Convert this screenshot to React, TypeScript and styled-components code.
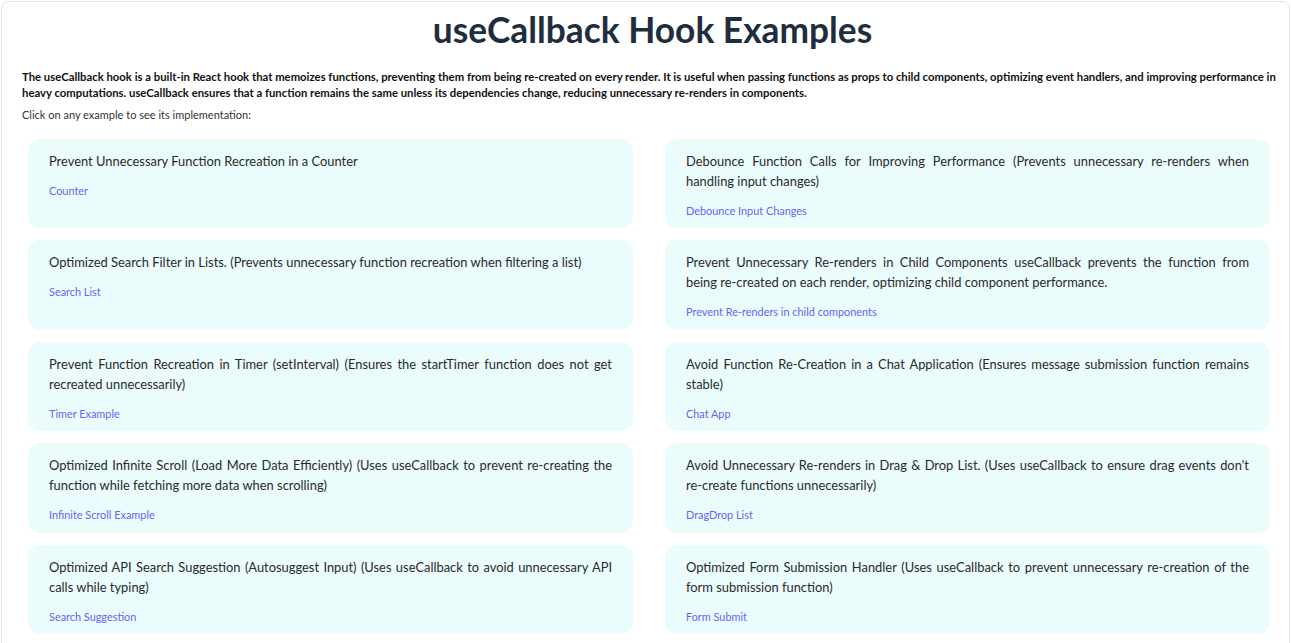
import React from "react";
import styled, { createGlobalStyle } from "styled-components";

const GlobalStyle = createGlobalStyle`
  html, body {
    margin: 0;
    padding: 0;
    background: #ffffff;
  }
  body {
    font-family: "Lato", "Noto Sans", sans-serif;
    color: #222;
  }
`;

const Page = styled.div`
  padding: 1px 1px 0 1px;
`;

const Container = styled.div`
  border: 1px solid #e6e6e6;
  border-radius: 8px;
  padding: 0 6px 20px 20px;
  background: #fff;
`;

const Title = styled.h1`
  margin: 0;
  padding-top: 8px;
  text-align: center;
  font-family: "Lato", sans-serif;
  font-weight: 700;
  font-size: 35.3px;
  line-height: 40px;
  color: #1f2e3f;
`;

const Intro = styled.p`
  margin: 19px 0 0;
  font-size: 11.32px;
  line-height: 16px;
  font-weight: 700;
  color: #111;
`;

const Hint = styled.p`
  margin: 6px 0 0;
  font-size: 11px;
  line-height: 16px;
  color: #333;
`;

const Grid = styled.div`
  display: grid;
  grid-template-columns: 1fr 1fr;
  column-gap: 32px;
  row-gap: 12px;
  margin: 16px 13px 0 6px;
`;

const Card = styled.div`
  background: #ebfcfd;
  border-radius: 12px;
  padding: 12px 21px 9.4px;
  cursor: pointer;
`;

const CardText = styled.p`
  margin: 0;
  font-size: 12.9px;
  line-height: 20px;
  color: #2a2a2a;
  text-align: justify;
`;

const CardLink = styled.a`
  display: block;
  margin-top: 12px;
  font-size: 10.9px;
  line-height: 16px;
  color: #6a63f0;
  text-decoration: none;
`;

const examples = [
  { text: "Prevent Unnecessary Function Recreation in a Counter", link: "Counter" },
  {
    text: "Debounce Function Calls for Improving Performance (Prevents unnecessary re-renders when handling input changes)",
    link: "Debounce Input Changes",
  },
  {
    text: "Optimized Search Filter in Lists. (Prevents unnecessary function recreation when filtering a list)",
    link: "Search List",
  },
  {
    text: "Prevent Unnecessary Re-renders in Child Components useCallback prevents the function from being re-created on each render, optimizing child component performance.",
    link: "Prevent Re-renders in child components",
  },
  {
    text: "Prevent Function Recreation in Timer (setInterval) (Ensures the startTimer function does not get recreated unnecessarily)",
    link: "Timer Example",
  },
  {
    text: "Avoid Function Re-Creation in a Chat Application (Ensures message submission function remains stable)",
    link: "Chat App",
  },
  {
    text: "Optimized Infinite Scroll (Load More Data Efficiently) (Uses useCallback to prevent re-creating the function while fetching more data when scrolling)",
    link: "Infinite Scroll Example",
  },
  {
    text: "Avoid Unnecessary Re-renders in Drag & Drop List. (Uses useCallback to ensure drag events don't re-create functions unnecessarily)",
    link: "DragDrop List",
  },
  {
    text: "Optimized API Search Suggestion (Autosuggest Input) (Uses useCallback to avoid unnecessary API calls while typing)",
    link: "Search Suggestion",
  },
  {
    text: "Optimized Form Submission Handler (Uses useCallback to prevent unnecessary re-creation of the form submission function)",
    link: "Form Submit",
  },
];

export default function App() {
  return (
    <>
      <GlobalStyle />
      <Page>
        <Container>
          <Title>useCallback Hook Examples</Title>
          <Intro>
            The useCallback hook is a built-in React hook that memoizes functions, preventing them from being
            re-created on every render. It is useful when passing functions as props to child components, optimizing
            event handlers, and improving performance in heavy computations. useCallback ensures that a function
            remains the same unless its dependencies change, reducing unnecessary re-renders in components.
          </Intro>
          <Hint>Click on any example to see its implementation:</Hint>
          <Grid>
            {examples.map((ex) => (
              <Card key={ex.link}>
                <CardText>{ex.text}</CardText>
                <CardLink href="#">{ex.link}</CardLink>
              </Card>
            ))}
          </Grid>
        </Container>
      </Page>
    </>
  );
}
